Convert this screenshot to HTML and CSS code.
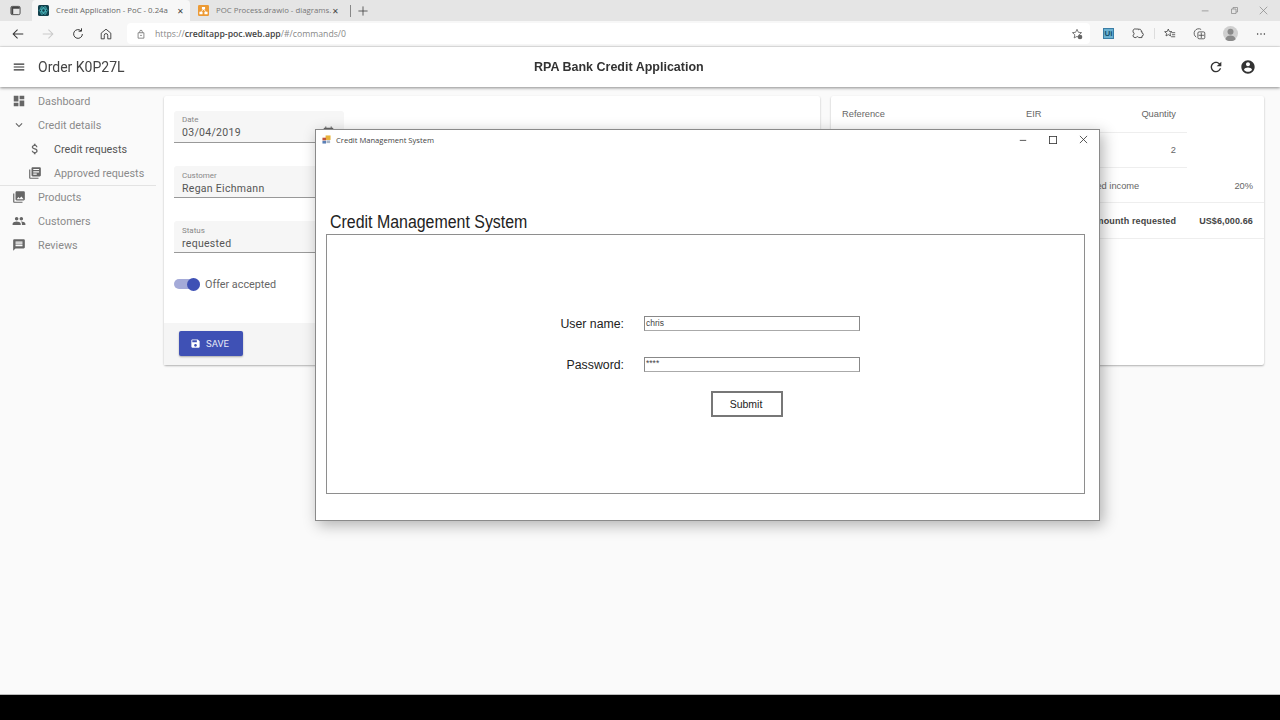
FILE: index.html
```html
<!DOCTYPE html>
<html lang="en">
<head>
<meta charset="utf-8">
<title>Credit Application</title>
<link rel="stylesheet" href="styles.css">
</head>
<body>
<div class="screen">
  <div class="tabstrip">
    <svg class="ic-window" viewBox="0 0 12 12"><rect x="1" y="1.500" width="10" height="9" rx="1.500" fill="none" stroke="#444" stroke-width="1"/><path d="M1.500 2h9v2h-9zM1.500 4h2v6h-2z" fill="#444"/></svg>
    <div class="tab active">
      <svg class="favicon" viewBox="0 0 14 14"><rect width="14" height="14" rx="2" fill="#12404c"/><g fill="none" stroke="#4fc3c9" stroke-width=".9"><ellipse cx="7" cy="7" rx="5.500" ry="2.200"/><ellipse cx="7" cy="7" rx="5.500" ry="2.200" transform="rotate(60 7 7)"/><ellipse cx="7" cy="7" rx="5.500" ry="2.200" transform="rotate(120 7 7)"/></g></svg>
      <span class="tab-title">Credit Application - PoC - 0.24a</span>
      <span class="tab-x">✕</span>
    </div>
    <div class="tab">
      <svg class="favicon" viewBox="0 0 14 14"><rect width="14" height="14" rx="1.500" fill="#ec9a35"/><path d="M5 2.500h4v3.200H5zM1.800 8.500h4v3.200h-4zM8.200 8.500h4v3.200h-4z" fill="#fff"/><path d="M7 5.500L3.800 8.700M7 5.500l3.200 3.200" stroke="#fff" stroke-width="1"/></svg>
      <span class="tab-title tab-title-fade">POC Process.drawio - diagrams.</span>
      <span class="tab-x">✕</span>
    </div>
    <div class="tab-sep"></div>
    <svg class="ic-plus" viewBox="0 0 12 12"><path d="M6 .5v11M.5 6h11" stroke="#444" stroke-width="1"/></svg>
    <div class="win-controls">
      <svg viewBox="0 0 12 12"><path d="M1 6.500h9" stroke="#8a8a8a" stroke-width="1"/></svg>
      <svg viewBox="0 0 12 12"><path d="M2 4h6v6H2zM4 4V2h6v6H8" fill="none" stroke="#8a8a8a" stroke-width="1"/></svg>
      <svg viewBox="0 0 12 12"><path d="M1 1l10 10M11 1L1 11" stroke="#8a8a8a" stroke-width="1"/></svg>
    </div>
  </div>

  <div class="toolbar">
    <svg class="tb-ic" viewBox="0 0 16 16"><path d="M14 8H2.500M7.500 3L2.500 8l5 5" fill="none" stroke="#333" stroke-width="1.200"/></svg>
    <svg class="tb-ic" viewBox="0 0 16 16"><path d="M2 8h11.500M8.500 3l5 5-5 5" fill="none" stroke="#c9c9c9" stroke-width="1.200"/></svg>
    <svg class="tb-ic tb-reload" viewBox="0 0 16 16"><path d="M13 8a5 5 0 1 1-1.600-3.700M12 1.500v3.300H8.700" fill="none" stroke="#333" stroke-width="1.100"/></svg>
    <svg class="tb-ic" viewBox="0 0 16 16"><path d="M2.500 7L8 2.500 13.500 7v6.500H10V9.500a2 2 0 0 0-4 0v4H2.500z" fill="none" stroke="#333" stroke-width="1"/></svg>
    <div class="address">
      <svg class="lock" viewBox="0 0 12 12"><path d="M2.500 4.500h7v6.500h-7zM4.500 4.500V3a1.500 1.500 0 0 1 3 0v1.500" fill="none" stroke="#666" stroke-width=".9"/><circle cx="6" cy="7.700" r=".8" fill="#666"/></svg>
      <span class="url"><span class="url-dim">https://</span><span class="url-host">creditapp-poc.web.app</span><span class="url-dim">/#/commands/0</span></span>
      <svg class="star" viewBox="0 0 14 14"><path d="M7 1.500l1.600 3.500 3.700.4-2.800 2.500.8 3.700L7 9.800l-3.300 1.800.8-3.700L1.700 5.400l3.700-.4z" fill="none" stroke="#555" stroke-width=".9"/><circle cx="10.500" cy="10.500" r="2.700" fill="#666"/></svg>
    </div>
    <div class="ext-ui">Ui</div>
    <svg class="tb-ic2" viewBox="0 0 16 16"><path d="M6 2.500h3.500v1a1.700 1.700 0 0 1 3 1.500v.5h1v2a1.700 1.700 0 0 1 0 3.500v2H9.500a1.700 1.700 0 0 0-3.200 0H5A2.500 2.500 0 0 1 2.500 11V10a1.800 1.800 0 0 0 0-3.500V5A2.500 2.500 0 0 1 6 2.500z" fill="none" stroke="#444" stroke-width="1.100"/></svg>
    <div class="tb-sep"></div>
    <svg class="tb-ic2" viewBox="0 0 16 16"><path d="M6.500 2.500l1.300 3 3.200.3-2.400 2.100.7 3.100-2.800-1.600-2.800 1.600.7-3.100L2 5.800l3.200-.3z" fill="none" stroke="#444" stroke-width="1"/><path d="M11 7h4M11 9.500h4M10 12h5" stroke="#444" stroke-width="1"/></svg>
    <svg class="tb-ic2" viewBox="0 0 16 16"><path d="M4 12.500A5 5 0 0 1 10 3" fill="none" stroke="#444" stroke-width="1"/><rect x="6" y="6" width="8.500" height="8.500" rx="1.500" fill="none" stroke="#444" stroke-width="1"/><path d="M10.200 7v6.500M7 10.200h6.500" stroke="#444" stroke-width="1"/></svg>
    <svg class="avatar" viewBox="0 0 16 16"><circle cx="8" cy="8" r="8" fill="#cfcfcf"/><circle cx="8" cy="6" r="3.200" fill="#8a8a8a"/><path d="M2.500 14c.8-3 3-4 5.500-4s4.700 1 5.500 4a8 8 0 0 1-11 0z" fill="#8a8a8a"/></svg>
    <svg class="more" viewBox="0 0 16 16"><circle cx="3.500" cy="8" r="1" fill="#333"/><circle cx="8" cy="8" r="1" fill="#333"/><circle cx="12.500" cy="8" r="1" fill="#333"/></svg>
  </div>

  <header class="appbar">
    <svg class="app-menu" viewBox="0 0 24 24"><path d="M3 18h18v-2H3v2zm0-5h18v-2H3v2zm0-7v2h18V6H3z"/></svg>
    <div class="app-order">Order K0P27L</div>
    <div class="app-title">RPA Bank Credit Application</div>
    <svg class="app-act" viewBox="0 0 24 24"><path d="M17.650 6.350C16.200 4.900 14.210 4 12 4c-4.420 0-7.990 3.580-7.990 8s3.570 8 7.990 8c3.730 0 6.840-2.550 7.730-6h-2.080c-.82 2.330-3.040 4-5.650 4-3.310 0-6-2.690-6-6s2.690-6 6-6c1.660 0 3.140.69 4.220 1.780L13 11h7V4l-2.350 2.350z"/></svg>
    <svg class="app-act" viewBox="0 0 24 24"><path d="M12 2C6.480 2 2 6.480 2 12s4.480 10 10 10 10-4.480 10-10S17.520 2 12 2zm0 3c1.660 0 3 1.340 3 3s-1.340 3-3 3-3-1.340-3-3 1.340-3 3-3zm0 14.200c-2.500 0-4.710-1.280-6-3.220.03-1.990 4-3.080 6-3.080 1.990 0 5.970 1.090 6 3.080-1.290 1.940-3.500 3.220-6 3.220z"/></svg>
  </header>

  <main class="main">
    <nav class="sidebar">
      <div class="nav-item"><svg viewBox="0 0 24 24"><path d="M3 13h8V3H3v10zm0 8h8v-6H3v6zm10 0h8V11h-8v10zm0-18v6h8V3h-8z"/></svg>Dashboard</div>
      <div class="nav-item"><svg viewBox="0 0 24 24"><path d="M16.590 8.590L12 13.170 7.410 8.590 6 10l6 6 6-6z"/></svg>Credit details</div>
      <div class="nav-item nav-sub nav-active"><svg viewBox="0 0 24 24"><path d="M11.800 10.900c-2.270-.59-3-1.200-3-2.150 0-1.090 1.010-1.850 2.700-1.850 1.780 0 2.440.85 2.500 2.100h2.210c-.07-1.720-1.120-3.300-3.210-3.810V3h-3v2.160c-1.940.42-3.500 1.680-3.500 3.610 0 2.310 1.910 3.460 4.700 4.130 2.500.6 3 1.480 3 2.410 0 .69-.49 1.790-2.700 1.790-2.060 0-2.870-.92-2.980-2.100h-2.200c.12 2.190 1.760 3.420 3.680 3.830V21h3v-2.150c1.950-.37 3.500-1.500 3.500-3.550 0-2.840-2.430-3.810-4.700-4.400z"/></svg>Credit requests</div>
      <div class="nav-item nav-sub nav-last"><svg viewBox="0 0 24 24"><path d="M4 6H2v14c0 1.100.9 2 2 2h14v-2H4V6zm16-4H8c-1.100 0-2 .9-2 2v12c0 1.100.9 2 2 2h12c1.100 0 2-.9 2-2V4c0-1.100-.9-2-2-2zm-1 9H9V9h10v2zm-4 4H9v-2h6v2zm4-8H9V5h10v2z"/></svg>Approved requests</div>
      <div class="nav-item"><svg viewBox="0 0 24 24"><path d="M22 16V4c0-1.100-.9-2-2-2H8c-1.100 0-2 .9-2 2v12c0 1.100.9 2 2 2h12c1.100 0 2-.9 2-2zm-11-4l2.030 2.710L16 11l4 5H8l3-4zM2 6v14c0 1.100.9 2 2 2h14v-2H4V6H2z"/></svg>Products</div>
      <div class="nav-item"><svg viewBox="0 0 24 24"><path d="M16 11c1.660 0 2.990-1.340 2.990-3S17.660 5 16 5c-1.660 0-3 1.340-3 3s1.340 3 3 3zm-8 0c1.660 0 2.990-1.340 2.990-3S9.660 5 8 5C6.340 5 5 6.340 5 8s1.340 3 3 3zm0 2c-2.330 0-7 1.170-7 3.500V19h14v-2.500c0-2.330-4.670-3.500-7-3.500zm8 0c-.29 0-.62.02-.97.05 1.160.84 1.970 1.970 1.970 3.450V19h6v-2.500c0-2.330-4.670-3.500-7-3.500z"/></svg>Customers</div>
      <div class="nav-item"><svg viewBox="0 0 24 24"><path d="M20 2H4c-1.100 0-1.990.9-1.990 2L2 22l4-4h14c1.100 0 2-.9 2-2V4c0-1.100-.9-2-2-2zm-2 12H6v-2h12v2zm0-3H6V9h12v2zm0-3H6V6h12v2z"/></svg>Reviews</div>
    </nav>

    <div class="content">
      <section class="card card-form">
        <div class="form-body">
          <div class="field field-date">
            <div class="field-label">Date</div>
            <div class="field-value">03/04/2019</div>
            <svg class="cal" viewBox="0 0 24 24"><path d="M19 3h-1V1h-2v2H8V1H6v2H5c-1.110 0-1.990.9-1.990 2L3 19c0 1.100.89 2 2 2h14c1.100 0 2-.9 2-2V5c0-1.100-.9-2-2-2zm0 16H5V8h14v11z"/></svg>
          </div>
          <div class="field">
            <div class="field-label">Customer</div>
            <div class="field-value">Regan Eichmann</div>
          </div>
          <div class="field">
            <div class="field-label">Status</div>
            <div class="field-value">requested</div>
          </div>
          <div class="toggle-row">
            <div class="toggle"><div class="toggle-thumb"></div></div>
            <span class="toggle-label">Offer accepted</span>
          </div>
        </div>
        <div class="card-actions">
          <div class="save-btn">
            <svg viewBox="0 0 24 24"><path d="M17 3H5c-1.110 0-2 .9-2 2v14c0 1.100.89 2 2 2h14c1.100 0 2-.9 2-2V7l-4-4zm-5 16c-1.660 0-3-1.340-3-3s1.340-3 3-3 3 1.340 3 3-1.340 3-3 3zm3-10H5V5h10v4z"/></svg>
            SAVE
          </div>
        </div>
      </section>

      <section class="card card-table">
        <div class="row row-head row-short">
          <span class="cell-ref">Reference</span><span class="cell-eir">EIR</span><span class="cell-qty">Quantity</span>
        </div>
        <div class="row row-item row-short">
          <span class="cell-ref">Credit</span><span class="cell-eir">5%</span><span class="cell-qty">2</span>
        </div>
        <div class="row row-sum">
          <span class="sum-label">Fixed income</span><span class="sum-value">20%</span>
        </div>
        <div class="row row-total">
          <span class="sum-label sum-right">Amounth requested</span><span class="sum-value">US$6,000.66</span>
        </div>
      </section>
    </div>

    <div class="dialog">
      <div class="dialog-bar">
        <svg class="dialog-ic" viewBox="0 0 10 10"><rect x="4" y="0.500" width="5.500" height="5" fill="#e8b23a"/><rect x="0.500" y="3" width="4" height="3" fill="#c0543a"/><rect x="0.500" y="6.500" width="4" height="3" fill="#5a7fb5"/><rect x="5" y="6" width="4" height="3" fill="#a9b6c6"/></svg>
        <span class="dialog-name">Credit Management System</span>
        <svg class="dlg-ctl dlg-min" viewBox="0 0 10 10"><path d="M1 5.500h8" stroke="#333" stroke-width="1"/></svg>
        <svg class="dlg-ctl dlg-max" viewBox="0 0 10 10"><rect x=".5" y=".5" width="9" height="9" fill="none" stroke="#333" stroke-width="1"/></svg>
        <svg class="dlg-ctl dlg-close" viewBox="0 0 10 10"><path d="M1 1l8 8M9 1L1 9" stroke="#333" stroke-width=".9"/></svg>
      </div>
      <h1 class="dialog-heading">Credit Management System</h1>
      <div class="login-box">
        <div class="login-form">
          <label class="login-label">User name:</label>
          <div class="login-input">chris</div>
          <label class="login-label">Password:</label>
          <div class="login-input login-pass">****</div>
          <div class="submit-btn">Submit</div>
        </div>
      </div>
    </div>
  </main>

  <div class="taskbar"></div>
</div>
</body>
</html>
```
FILE: styles.css
```css
* { box-sizing: border-box; }
html, body { margin: 0; padding: 0; height: 100%; overflow: hidden; }
body { font-family: Roboto, "Liberation Sans", sans-serif; color: #555; background: #000; }
.screen { width: 1280px; height: 720px; display: flex; flex-direction: column; overflow: hidden; filter: blur(.35px); }

/* browser chrome */
.tabstrip { height: 21px; background: #e5e5e5; display: flex; align-items: center; padding-left: 10px; flex: none; }
.ic-window { width: 11px; height: 11px; margin-right: 11px; flex: none; }
.tab { height: 21px; width: 153px; display: flex; align-items: center; padding-left: 6px; margin-right: 2px; font: 7.800px "Open Sans", "Liberation Sans", sans-serif; color: #666; flex: none; }
.tab.active { background: #f7f7f7; width: 158px; border-radius: 4px 4px 0 0; }
.favicon { width: 11px; height: 11px; margin-right: 7px; flex: none; }
.tab-title { flex: 1; white-space: nowrap; padding-bottom: 1px; }
.tab-title-fade { color: #777; }
.tab-x { width: 13px; font-size: 8px; color: #444; flex: none; }
.tab-sep { width: 1px; height: 12px; background: #888; margin-left: 3px; flex: none; }
.ic-plus { width: 10px; height: 10px; margin-left: 7px; flex: none; }
.win-controls { margin-left: auto; display: flex; gap: 20px; padding-right: 12px; }
.win-controls svg { width: 9px; height: 9px; }

.toolbar { height: 26px; background: #f7f7f7; display: flex; align-items: center; padding-left: 11px; flex: none; border-bottom: 1px solid #e8e8e8; }
.tb-ic { width: 14px; height: 14px; margin-right: 16px; flex: none; }
.tb-reload { margin-right: 14px; }
.address { width: 963px; height: 21px; margin-left: -2px; background: #fff; border-radius: 4px; display: flex; align-items: center; padding-left: 9px; }
.lock { width: 10px; height: 10px; margin-right: 9px; flex: none; }
.url { font: 8.700px "Open Sans", "Liberation Sans", sans-serif; color: #555; white-space: nowrap; }
.url-dim { color: #888; }
.url-host { color: #444; font-weight: 600; }
.star { width: 12px; height: 12px; margin-left: auto; margin-right: 7px; }
.ext-ui { width: 11px; height: 11px; margin-left: 13px; margin-right: 17px; background: #6bb1d1; border: 1px solid #3b7ea6; color: #12506f; font: bold 8px/9px "Liberation Sans", sans-serif; text-align: center; flex: none; }
.tb-ic2 { width: 13px; height: 13px; margin-right: 17px; flex: none; }
.tb-sep { width: 1px; height: 11px; background: #ddd; margin-left: -7px; margin-right: 8px; flex: none; }
.avatar { width: 15px; height: 15px; margin-right: 17px; flex: none; }
.more { width: 12px; height: 12px; flex: none; }

/* app */
.appbar { height: 40px; background: #fff; display: flex; align-items: center; padding-left: 12px; padding-right: 21px; flex: none; box-shadow: 0 1px 3px rgba(0,0,0,.45); position: relative; z-index: 2; }
.app-menu { width: 14px; height: 14px; fill: #333; flex: none; }
.app-order { font-size: 14px; color: #444; margin-left: 12px; width: 496px; flex: none; white-space: nowrap; }
.app-title { font: bold 12.500px "Liberation Sans", sans-serif; color: #333; width: 674px; white-space: nowrap; flex: none; }
.app-act { width: 16px; height: 16px; fill: #333; margin-right: 16px; flex: none; }
.app-act:last-child { margin-right: 0; }
.main { flex: 1; background: #fafafa; display: flex; position: relative; min-height: 0; }

.sidebar { width: 164px; padding-top: 2px; flex: none; }
.nav-item { height: 24px; display: flex; align-items: center; font-size: 10.800px; color: #8a8a8a; padding-left: 12px; white-space: nowrap; }
.nav-item svg { width: 14px; height: 14px; fill: #666; margin-right: 12px; flex: none; }
.nav-sub { padding-left: 28px; }
.nav-active { color: #555; }
.nav-last { box-shadow: 0 1px 0 #e3e3e3; width: 156px; }

.content { flex: 1; display: flex; gap: 11px; padding: 9px 16px 0 0; align-items: flex-start; }
.card { background: #fff; height: 269px; box-shadow: 0 1px 2px rgba(0,0,0,.3); border-radius: 2px; flex: none; }
.card-form { width: 656px; display: flex; flex-direction: column; }
.card-table { width: 433px; }

.form-body { flex: 1; padding: 15px 10px 0; }
.field { width: 170px; height: 32px; margin-bottom: 23px; background: #f6f6f6; border-bottom: 1px solid #999; border-radius: 3px 3px 0 0; padding: 5px 8px 0; position: relative; }
.field-date { padding-top: 4px; }
.field-label { font-size: 8px; line-height: 9px; color: #888; }
.field-value { font-size: 10.500px; line-height: 14px; margin-top: 2px; color: #555; letter-spacing: .3px; }
.cal { width: 13px; height: 13px; fill: #666; position: absolute; right: 9px; top: 15px; }
.toggle-row { display: flex; align-items: center; margin-top: -2px; height: 20px; }
.toggle { width: 26px; height: 10px; background: #a4aad8; border-radius: 5px; position: relative; flex: none; }
.toggle-thumb { width: 13px; height: 13px; border-radius: 50%; background: #3f51b5; position: absolute; right: 0; top: -1.500px; }
.toggle-label { font-size: 10.800px; color: #666; margin-left: 5px; }
.card-actions { height: 42px; background: #f5f5f5; padding: 8px 15px; flex: none; }
.save-btn { width: 64px; height: 25px; background: #3f51b5; border-radius: 2px; color: #e8e9f5; font-size: 9.500px; display: flex; align-items: center; padding-left: 11px; box-shadow: 0 1px 2px rgba(0,0,0,.3); }
.save-btn svg { width: 11px; height: 11px; fill: #fff; margin-right: 5px; flex: none; }

.row { display: flex; align-items: center; font: 9.300px "Liberation Sans", sans-serif; color: #666; padding-left: 11px; border-bottom: 1px solid #eee; }
.row-short { width: 356px; }
.row-head { height: 37px; }
.row-item { height: 35px; }
.row-sum { height: 35px; padding-right: 11px; padding-top: 1px; }
.row-total { height: 36px; padding-right: 11px; font-weight: bold; font-size: 9px; color: #444; letter-spacing: .12px; }
.cell-ref { width: 184px; }
.cell-eir { width: 60px; }
.cell-qty { width: 90px; text-align: right; }
.sum-label { flex: none; width: 334px; padding-left: 242px; }
.sum-right { text-align: right; padding-left: 0; }
.sum-value { flex: 1; text-align: right; }

/* floating window */
.dialog { position: absolute; left: 315px; top: 42px; width: 785px; height: 392px; background: #fff; border: 1px solid #8a8a8a; box-shadow: 3px 4px 14px rgba(0,0,0,.3); display: flex; flex-direction: column; padding: 0 14px 26px 10px; z-index: 5; color: #111; }
.dialog-bar { height: 19px; margin: 0 -14px 1px -4px; display: flex; align-items: center; flex: none; }
.dialog-ic { width: 9px; height: 9px; margin-left: 0; margin-right: 5px; flex: none; }
.dialog-name { font: 7.600px "Open Sans", "Liberation Sans", sans-serif; color: #444; }
.dlg-ctl { width: 8px; height: 8px; flex: none; }
.dlg-min { margin-left: auto; }
.dlg-max { margin-left: 22px; }
.dlg-close { margin-left: 22px; margin-right: 11px; width: 9px; height: 9px; }
.dialog-heading { font: 400 17.500px "Liberation Sans", sans-serif; color: #222; margin: 0; padding: 62px 0 2px 4.400px; line-height: 20px; height: 84px; white-space: nowrap; transform: scaleX(.91); transform-origin: left; flex: none; }
.login-box { flex: 1; border: 1px solid #8e8e8e; padding-top: 81px; }
.login-form { display: grid; grid-template-columns: 297px 216px; column-gap: 20px; row-gap: 26px; align-items: center; }
.login-label { font: 12.300px "Liberation Sans", sans-serif; color: #222; text-align: right; }
.login-input { height: 15px; border: 1px solid #888; border-bottom-color: #aaa; font: 8.500px/12px "Liberation Sans", sans-serif; color: #444; padding-left: 1px; }
.login-pass { line-height: 10px; }
.submit-btn { grid-column: 2; width: 72px; height: 26px; margin: -7px 0 0 67px; border: 2px solid #777; padding-right: 2px; font: 10.500px/22px "Liberation Sans", sans-serif; color: #222; text-align: center; }
.taskbar { height: 26px; background: #000; border-top: 1px solid #bbb; flex: none; }
```
